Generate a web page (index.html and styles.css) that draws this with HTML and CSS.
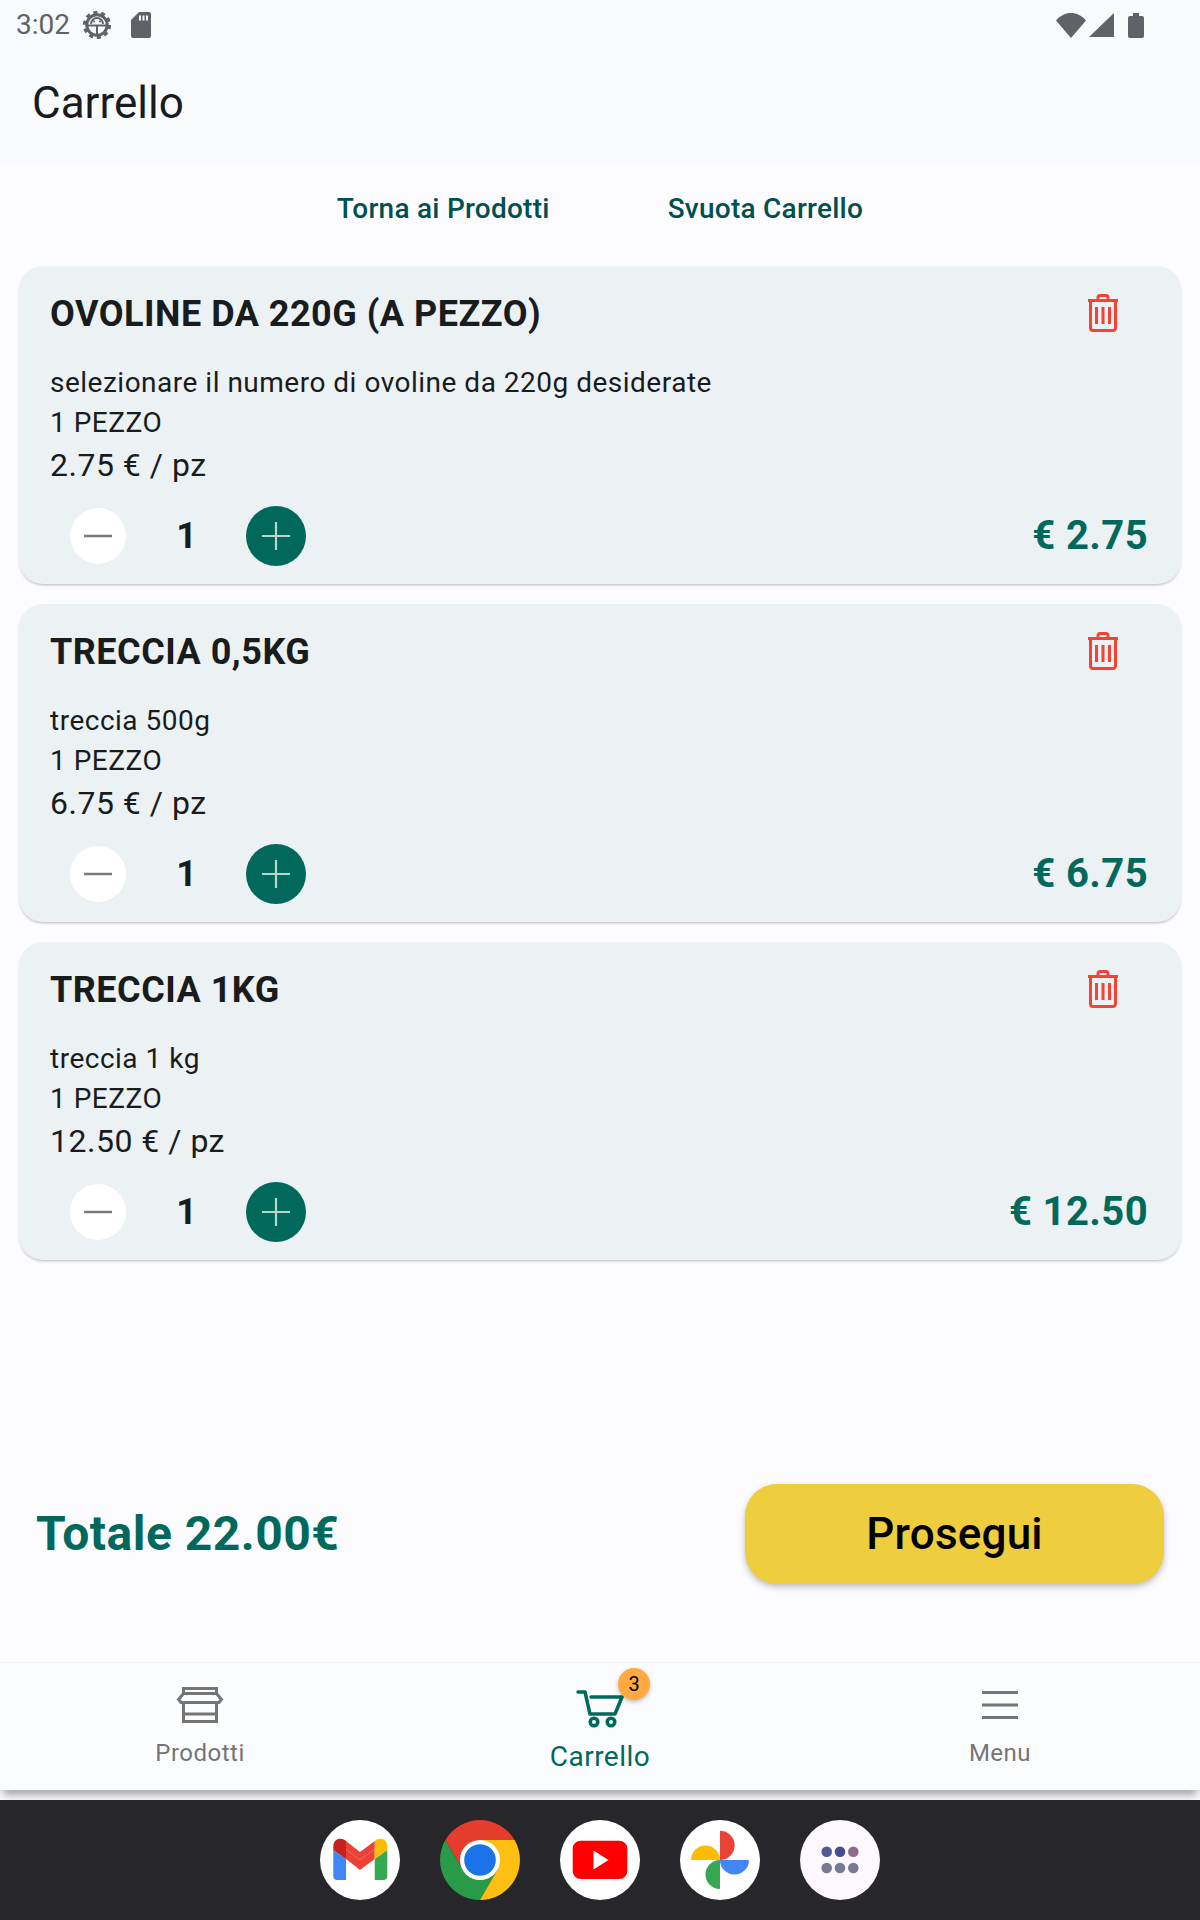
FILE: index.html
```html
<!DOCTYPE html>
<html lang="it">
<head>
<meta charset="utf-8">
<title>Carrello</title>
<link rel="stylesheet" href="styles.css">
</head>
<body>
<div class="screen">
  <header class="top">
    <div class="status">
      <span class="time">3:02</span>
      <svg class="gear" viewBox="0 0 28 28"><circle cx="14" cy="14" r="10.2" fill="none" stroke="#5f6368" stroke-width="3"/><circle cx="14" cy="14" r="12.6" fill="none" stroke="#5f6368" stroke-width="3" stroke-dasharray="4.1 3.8"/><path d="M5 14.5H23M14 14.5V23M8 13a6 6 0 0 1 12 0" fill="none" stroke="#5f6368" stroke-width="2"/><circle cx="11" cy="10.5" r="1" fill="#5f6368"/><circle cx="17" cy="10.5" r="1" fill="#5f6368"/></svg>
      <svg class="sd" viewBox="0 0 20 26"><path d="M8 0H18a2 2 0 0 1 2 2V24a2 2 0 0 1-2 2H2a2 2 0 0 1-2-2V8Z" fill="#5f6368"/><path d="M8 3.500h2v5H8ZM11.500 3.500h2v5h-2ZM15 3.500h2v5h-2Z" fill="#f9fafc"/></svg>
      <span class="status-gap"></span>
      <svg class="wifi" viewBox="0 0 30 25"><path d="M0 7.500C8-2.500 22-2.500 30 7.500L15 25Z" fill="#5f6368"/></svg>
      <svg class="signal" viewBox="0 0 25 24"><path d="M25 0V24H0Z" fill="#5f6368"/></svg>
      <svg class="battery" viewBox="0 0 16 25"><path d="M5 0H11V3H14a2 2 0 0 1 2 2V23a2 2 0 0 1-2 2H2a2 2 0 0 1-2-2V5a2 2 0 0 1 2-2H5Z" fill="#5f6368"/></svg>
    </div>
    <div class="appbar"><h1 class="apptitle">Carrello</h1></div>
  </header>

  <nav class="links">
    <a class="link">Torna ai Prodotti</a>
    <a class="link">Svuota Carrello</a>
  </nav>

  <main class="list">
    <article class="card">
      <div class="card-head">
        <h2 class="name">OVOLINE DA 220G (A PEZZO)</h2>
        <svg class="trash" viewBox="0 0 32 38"><use href="#trash-shape"/></svg>
      </div>
      <p class="line">selezionare il numero di ovoline da 220g desiderate</p>
      <p class="line">1 PEZZO</p>
      <p class="unit">2.75 € / pz</p>
      <div class="qty-row">
        <button class="minus"><svg class="op" viewBox="0 0 28 28"><path d="M0 14H28" stroke="#7a7a7a" stroke-width="2.500"/></svg></button>
        <span class="count">1</span>
        <button class="plus"><svg class="op" viewBox="0 0 28 28"><path d="M0 14H28M14 0V28" stroke="#b4d8cd" stroke-width="2.200"/></svg></button>
        <span class="sum">€ 2.75</span>
      </div>
    </article>

    <article class="card">
      <div class="card-head">
        <h2 class="name">TRECCIA 0,5KG</h2>
        <svg class="trash" viewBox="0 0 32 38"><use href="#trash-shape"/></svg>
      </div>
      <p class="line">treccia 500g</p>
      <p class="line">1 PEZZO</p>
      <p class="unit">6.75 € / pz</p>
      <div class="qty-row">
        <button class="minus"><svg class="op" viewBox="0 0 28 28"><path d="M0 14H28" stroke="#7a7a7a" stroke-width="2.500"/></svg></button>
        <span class="count">1</span>
        <button class="plus"><svg class="op" viewBox="0 0 28 28"><path d="M0 14H28M14 0V28" stroke="#b4d8cd" stroke-width="2.200"/></svg></button>
        <span class="sum">€ 6.75</span>
      </div>
    </article>

    <article class="card">
      <div class="card-head">
        <h2 class="name">TRECCIA 1KG</h2>
        <svg class="trash" viewBox="0 0 32 38"><use href="#trash-shape"/></svg>
      </div>
      <p class="line">treccia 1 kg</p>
      <p class="line">1 PEZZO</p>
      <p class="unit">12.50 € / pz</p>
      <div class="qty-row">
        <button class="minus"><svg class="op" viewBox="0 0 28 28"><path d="M0 14H28" stroke="#7a7a7a" stroke-width="2.500"/></svg></button>
        <span class="count">1</span>
        <button class="plus"><svg class="op" viewBox="0 0 28 28"><path d="M0 14H28M14 0V28" stroke="#b4d8cd" stroke-width="2.200"/></svg></button>
        <span class="sum">€ 12.50</span>
      </div>
    </article>
  </main>

  <section class="checkout">
    <strong class="total">Totale 22.00€</strong>
    <button class="next">Prosegui</button>
  </section>

  <footer class="tabs">
    <div class="tab">
      <svg class="tab-icon" viewBox="0 0 48 48"><g fill="none" stroke="#757575" stroke-width="3"><path d="M7.500 13V7.500H40.500V13"/><path d="M7.500 12.500H40.500L45.500 18.500L43 21.500H5L2.500 18.500Z"/><path d="M7.500 21.500V40.500H40.500V21.500M7.500 33H40.500"/></g><path d="M5 21a3 3 0 0 0 5.600 0a3 3 0 0 0 5.600 0a3 3 0 0 0 5.600 0a3 3 0 0 0 5.600 0a3 3 0 0 0 5.600 0a3 3 0 0 0 5.600 0a3 3 0 0 0 5.600 0Z" fill="#757575"/></svg>
      <span class="tab-label">Prodotti</span>
    </div>
    <div class="tab tab-active">
      <div class="cart-wrap">
        <svg class="cart" viewBox="0 0 48 44"><g fill="none" stroke="#00695c" stroke-width="3.500" stroke-linecap="round" stroke-linejoin="round"><path d="M2 3H9L14 25H39L46 8H15"/><circle cx="18" cy="33" r="3.800"/><circle cx="35" cy="33" r="3.800"/></g></svg>
        <span class="badge">3</span>
      </div>
      <span class="tab-label-active">Carrello</span>
    </div>
    <div class="tab">
      <svg class="tab-icon" viewBox="0 0 48 48"><path d="M6 11.500H42M6 24H42M6 36.500H42" stroke="#757575" stroke-width="3"/></svg>
      <span class="tab-label">Menu</span>
    </div>
  </footer>

  <div class="dock">
    <svg class="app" viewBox="0 0 80 80"><circle cx="40" cy="40" r="40" fill="#fff"/><path d="M13.300 30V56a4 4 0 0 0 4 4H26V39Z" fill="#4285f4"/><path d="M67.300 30V56a4 4 0 0 1-4 4H54.700V39Z" fill="#34a853"/><path d="M26 29 40 40 54.700 29V39L40 50 26 39Z" fill="#ea4335"/><path d="M13.300 30V26C13.300 19 21 16.500 26 21V39Z" fill="#c5221f"/><path d="M67.300 30V26C67.300 19 59.500 16.500 54.700 21V39Z" fill="#fbbc04"/><path d="M26 21 40 32 54.700 21V29L40 40 26 29Z" fill="#ea4335"/></svg>
    <svg class="app" viewBox="0 0 80 80"><path d="M5.400 20A40 40 0 0 1 74.600 20H40L22.700 50Z" fill="#e53c2e"/><path d="M5.400 20A40 40 0 0 0 40 80L57.300 50H22.700Z" fill="#279b48"/><path d="M74.600 20A40 40 0 0 1 40 80L57.300 50 40 20Z" fill="#fdc012"/><circle cx="40" cy="40" r="20" fill="#fff"/><circle cx="40" cy="40" r="15.800" fill="#1a73e8"/></svg>
    <svg class="app" viewBox="0 0 80 80"><circle cx="40" cy="40" r="40" fill="#fff"/><rect x="12.700" y="20.700" width="54.600" height="38.300" rx="8" fill="#f00"/><path d="M33.500 30.500 48.500 40 33.500 49.500Z" fill="#fff"/></svg>
    <svg class="app" viewBox="0 0 80 80"><circle cx="40" cy="40" r="40" fill="#fff"/><path d="M40 10.700A14.650 14.650 0 0 1 40 40Z" fill="#ea4335"/><path d="M11 40A14.500 14.500 0 0 1 40 40Z" fill="#fbbc04"/><path d="M40 40A14.500 14.500 0 0 0 69 40Z" fill="#4285f4"/><path d="M40 40A14.500 14.500 0 0 0 40 69Z" fill="#34a853"/></svg>
    <svg class="app" viewBox="0 0 80 80"><circle cx="40" cy="40" r="40" fill="#fcf8fd"/><circle cx="26.700" cy="31.700" r="5.300" fill="#4f5a94"/><circle cx="40" cy="31.700" r="5.300" fill="#444e8c"/><circle cx="53.300" cy="31.700" r="5.300" fill="#8b6a8c"/><circle cx="26.700" cy="48" r="5.300" fill="#777a90"/><circle cx="40" cy="48" r="5.300" fill="#777a90"/><circle cx="53.300" cy="48" r="5.300" fill="#777a90"/></svg>
  </div>
</div>

<svg class="defs" width="0" height="0"><defs><g id="trash-shape"><path d="M11 6V3.500A2 2 0 0 1 13 1.500H19A2 2 0 0 1 21 3.500V6M1 6.500H31" fill="none" stroke="#f44336" stroke-width="3"/><path d="M3.500 6.500V34A2.500 2.500 0 0 0 6 36.500H26A2.500 2.500 0 0 0 28.500 34V6.500" fill="none" stroke="#f44336" stroke-width="3"/><path d="M9.500 13V30M16 13V30M22.500 13V30" stroke="#f44336" stroke-width="3"/></g></defs></svg>
</body>
</html>
```
FILE: styles.css
```css
* { box-sizing: border-box; }
html, body { margin: 0; padding: 0; }
body { font-family: Roboto, "Noto Sans", sans-serif; background: #fcfcff; color: #191c1d; }
.screen { width: 1200px; height: 1920px; display: flex; flex-direction: column; overflow: hidden; }
.defs { display: block; }

.top { background: #f9fafc; height: 162px; flex: none; }
.status { height: 50px; display: flex; align-items: center; padding: 0 56px 0 16px; }
.time { font-size: 28px; color: #5f6368; line-height: 50px; width: 67px; }
.gear { width: 28px; height: 28px; }
.sd { width: 20px; height: 26px; margin-left: 20px; }
.status-gap { flex: 1; }
.wifi { width: 30px; height: 25px; }
.signal { width: 25px; height: 24px; margin-left: 3px; }
.battery { width: 16px; height: 25px; margin-left: 14px; }
.appbar { height: 112px; padding: 0 0 6px 32px; display: flex; align-items: center; }
.apptitle { font-size: 44px; font-weight: 400; margin: 0; line-height: 52px; color: #191c1d; }

.links { height: 94px; flex: none; display: flex; align-items: center; justify-content: center; gap: 118px; }
.link { font-size: 28px; font-weight: 500; letter-spacing: .25px; color: #00504f; line-height: 36px; }

.list { flex: 1; padding: 10px 19px 0; display: flex; flex-direction: column; gap: 20px; }
.card { height: 318px; flex: none; background: #ecf1f3; border-radius: 24px; padding: 24px 33px 18px 31px; box-shadow: 0 2px 3px -1px rgba(0,0,0,.28); }
.card-head { height: 48px; display: flex; align-items: center; justify-content: space-between; margin-bottom: 25px; }
.name { font-size: 36px; font-weight: 700; line-height: 48px; margin: 0; letter-spacing: .5px; color: #191c1d; }
.trash { width: 32px; height: 38px; margin: -2px 29px 0 0; }
.line { font-size: 28px; line-height: 40px; margin: 0; letter-spacing: .5px; color: #191c1d; }
.unit { font-size: 32px; line-height: 45px; margin: 0; letter-spacing: .5px; color: #191c1d; }
.qty-row { height: 60px; margin-top: 18px; display: flex; align-items: center; padding-left: 20px; }
.minus, .plus { border: 0; padding: 0; border-radius: 50%; display: flex; align-items: center; justify-content: center; flex: none; }
.minus { width: 56px; height: 56px; background: #fff; }
.plus { width: 60px; height: 60px; background: #00695c; }
.op { width: 28px; height: 28px; }
.count { width: 120px; text-align: center; font-size: 36px; font-weight: 700; line-height: 60px; padding-left: 1px; }
.sum { margin-left: auto; font-size: 40px; font-weight: 700; letter-spacing: .4px; color: #00695c; line-height: 60px; }

.checkout { flex: none; height: 178px; padding: 0 36px 78px 36px; display: flex; align-items: center; justify-content: space-between; }
.total { font-size: 48px; font-weight: 700; letter-spacing: .5px; color: #00695c; line-height: 56px; }
.next { width: 419px; height: 100px; border: 0; border-radius: 32px; background: #eecd3f; color: #000; font: 500 44px Roboto, sans-serif; letter-spacing: .2px; box-shadow: 0 3px 6px rgba(0,0,0,.25); }

.tabs { flex: none; height: 128px; background: #fbfcfe; border-top: 1px solid #f1f1f4; display: flex; box-shadow: 0 8px 8px -3px rgba(0,0,0,.35); }
.tab { width: 400px; display: flex; flex-direction: column; align-items: center; }
.tab-icon { width: 48px; height: 48px; margin-top: 18px; }
.tab-label { font-size: 24px; line-height: 30px; letter-spacing: .5px; color: #757575; margin-top: 9px; }
.tab-active { position: relative; }
.cart-wrap { position: relative; width: 48px; height: 44px; margin-top: 26px; }
.cart { width: 48px; height: 44px; display: block; }
.badge { position: absolute; left: 42px; top: -21px; width: 32px; height: 32px; border-radius: 50%; background: #ffa940; font-size: 20px; line-height: 32px; text-align: center; color: #000; box-shadow: 0 2px 4px rgba(0,0,0,.25); }
.tab-label-active { font-size: 28px; line-height: 34px; letter-spacing: .5px; color: #00695c; margin-top: 7px; }

.dock { flex: none; height: 120px; margin-top: 10px; background: #26262b; display: flex; justify-content: center; align-items: center; gap: 40px; }
.app { width: 80px; height: 80px; }
```
